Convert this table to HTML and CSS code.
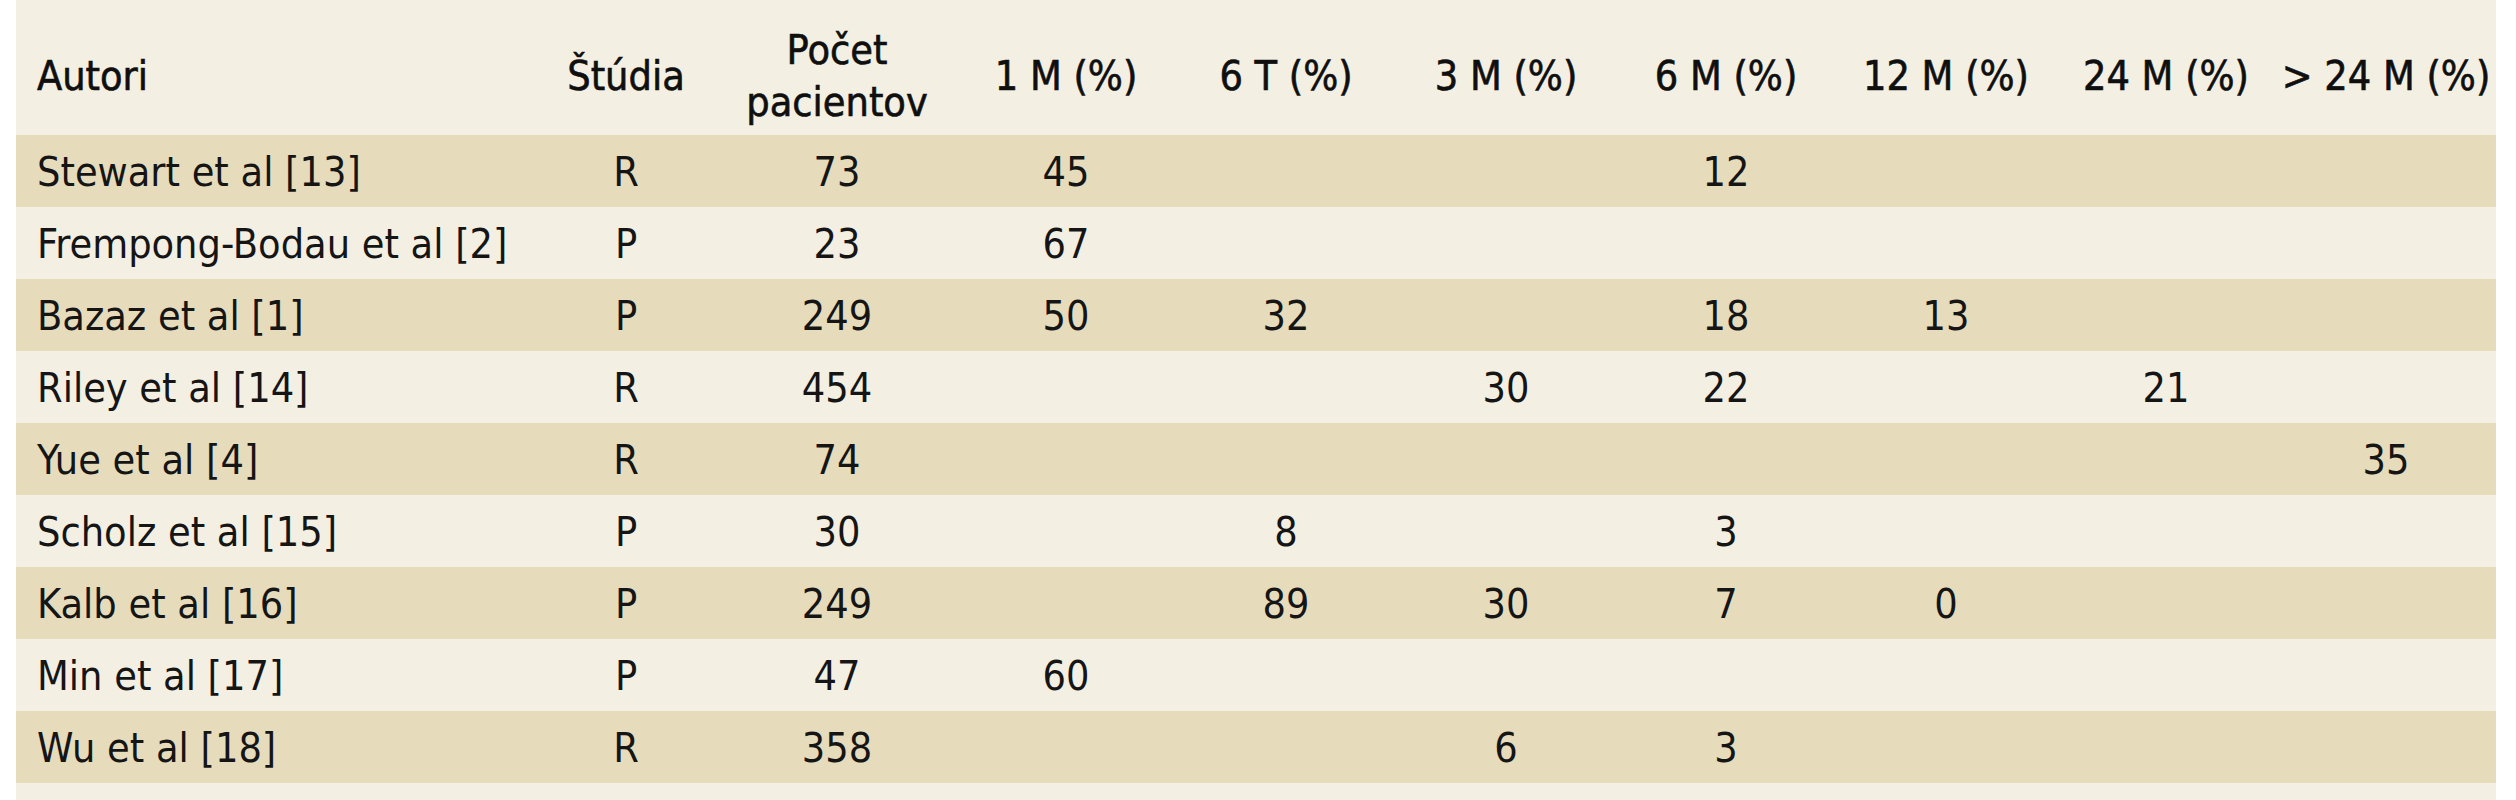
FILE: index.html
```html
<!DOCTYPE html>
<html lang="sk">
<head>
<meta charset="utf-8">
<title>Tabuľka</title>
<link rel="stylesheet" href="styles.css">
</head>
<body>
<div class="page">
  <div class="panel">
    <table class="data">
      <colgroup>
        <col class="c-autor">
        <col class="c-studia">
        <col class="c-pocet">
        <col class="c-m"><col class="c-m"><col class="c-m"><col class="c-m"><col class="c-m"><col class="c-m"><col class="c-m">
      </colgroup>
      <thead>
        <tr>
          <th class="left">Autori</th>
          <th>Štúdia</th>
          <th>Počet<br>pacientov</th>
          <th>1 M (%)</th>
          <th>6 T (%)</th>
          <th>3 M (%)</th>
          <th>6 M (%)</th>
          <th>12 M (%)</th>
          <th>24 M (%)</th>
          <th>&gt; 24 M (%)</th>
        </tr>
      </thead>
      <tbody>
        <tr class="dark"><td class="left">Stewart et al [13]</td><td>R</td><td>73</td><td>45</td><td></td><td></td><td>12</td><td></td><td></td><td></td></tr>
        <tr><td class="left">Frempong-Bodau et al [2]</td><td>P</td><td>23</td><td>67</td><td></td><td></td><td></td><td></td><td></td><td></td></tr>
        <tr class="dark"><td class="left">Bazaz et al [1]</td><td>P</td><td>249</td><td>50</td><td>32</td><td></td><td>18</td><td>13</td><td></td><td></td></tr>
        <tr><td class="left">Riley et al [14]</td><td>R</td><td>454</td><td></td><td></td><td>30</td><td>22</td><td></td><td>21</td><td></td></tr>
        <tr class="dark"><td class="left">Yue et al [4]</td><td>R</td><td>74</td><td></td><td></td><td></td><td></td><td></td><td></td><td>35</td></tr>
        <tr><td class="left">Scholz et al [15]</td><td>P</td><td>30</td><td></td><td>8</td><td></td><td>3</td><td></td><td></td><td></td></tr>
        <tr class="dark"><td class="left">Kalb et al [16]</td><td>P</td><td>249</td><td></td><td>89</td><td>30</td><td>7</td><td>0</td><td></td><td></td></tr>
        <tr><td class="left">Min et al [17]</td><td>P</td><td>47</td><td>60</td><td></td><td></td><td></td><td></td><td></td><td></td></tr>
        <tr class="dark"><td class="left">Wu et al [18]</td><td>R</td><td>358</td><td></td><td></td><td>6</td><td>3</td><td></td><td></td><td></td></tr>
      </tbody>
    </table>
  </div>
</div>
</body>
</html>
```

FILE: styles.css
```css
html, body {
  margin: 0;
  padding: 0;
  background: #ffffff;
}

.page {
  padding: 0 20px 0 16px;
}

.panel {
  width: 2480px;
  background: #f3efe2;
  padding-bottom: 40px;
}

.data {
  width: 2477px;
  border-collapse: collapse;
  table-layout: fixed;
  font-family: "DejaVu Sans Condensed", "DejaVu Sans", sans-serif;
  font-size: 41px;
  line-height: 52px;
  color: #151515;
}

.c-autor { width: 518px; }
.c-studia { width: 184px; }
.c-pocet { width: 238px; }
.c-m { width: 220px; }

.data th {
  height: 135px;
  box-sizing: border-box;
  padding: 16px 0 0 0;
  font-weight: normal;
  text-align: center;
  vertical-align: middle;
  white-space: nowrap;
  color: #0f0f0f;
  -webkit-text-stroke: 0.6px currentColor;
}

.data td {
  height: 72px;
  box-sizing: border-box;
  padding: 2px 0 0 0;
  text-align: center;
  vertical-align: middle;
  white-space: nowrap;
}

.data .left {
  text-align: left;
  padding-left: 21px;
}

.data tr.dark {
  background: #e6dcbc;
}
```
